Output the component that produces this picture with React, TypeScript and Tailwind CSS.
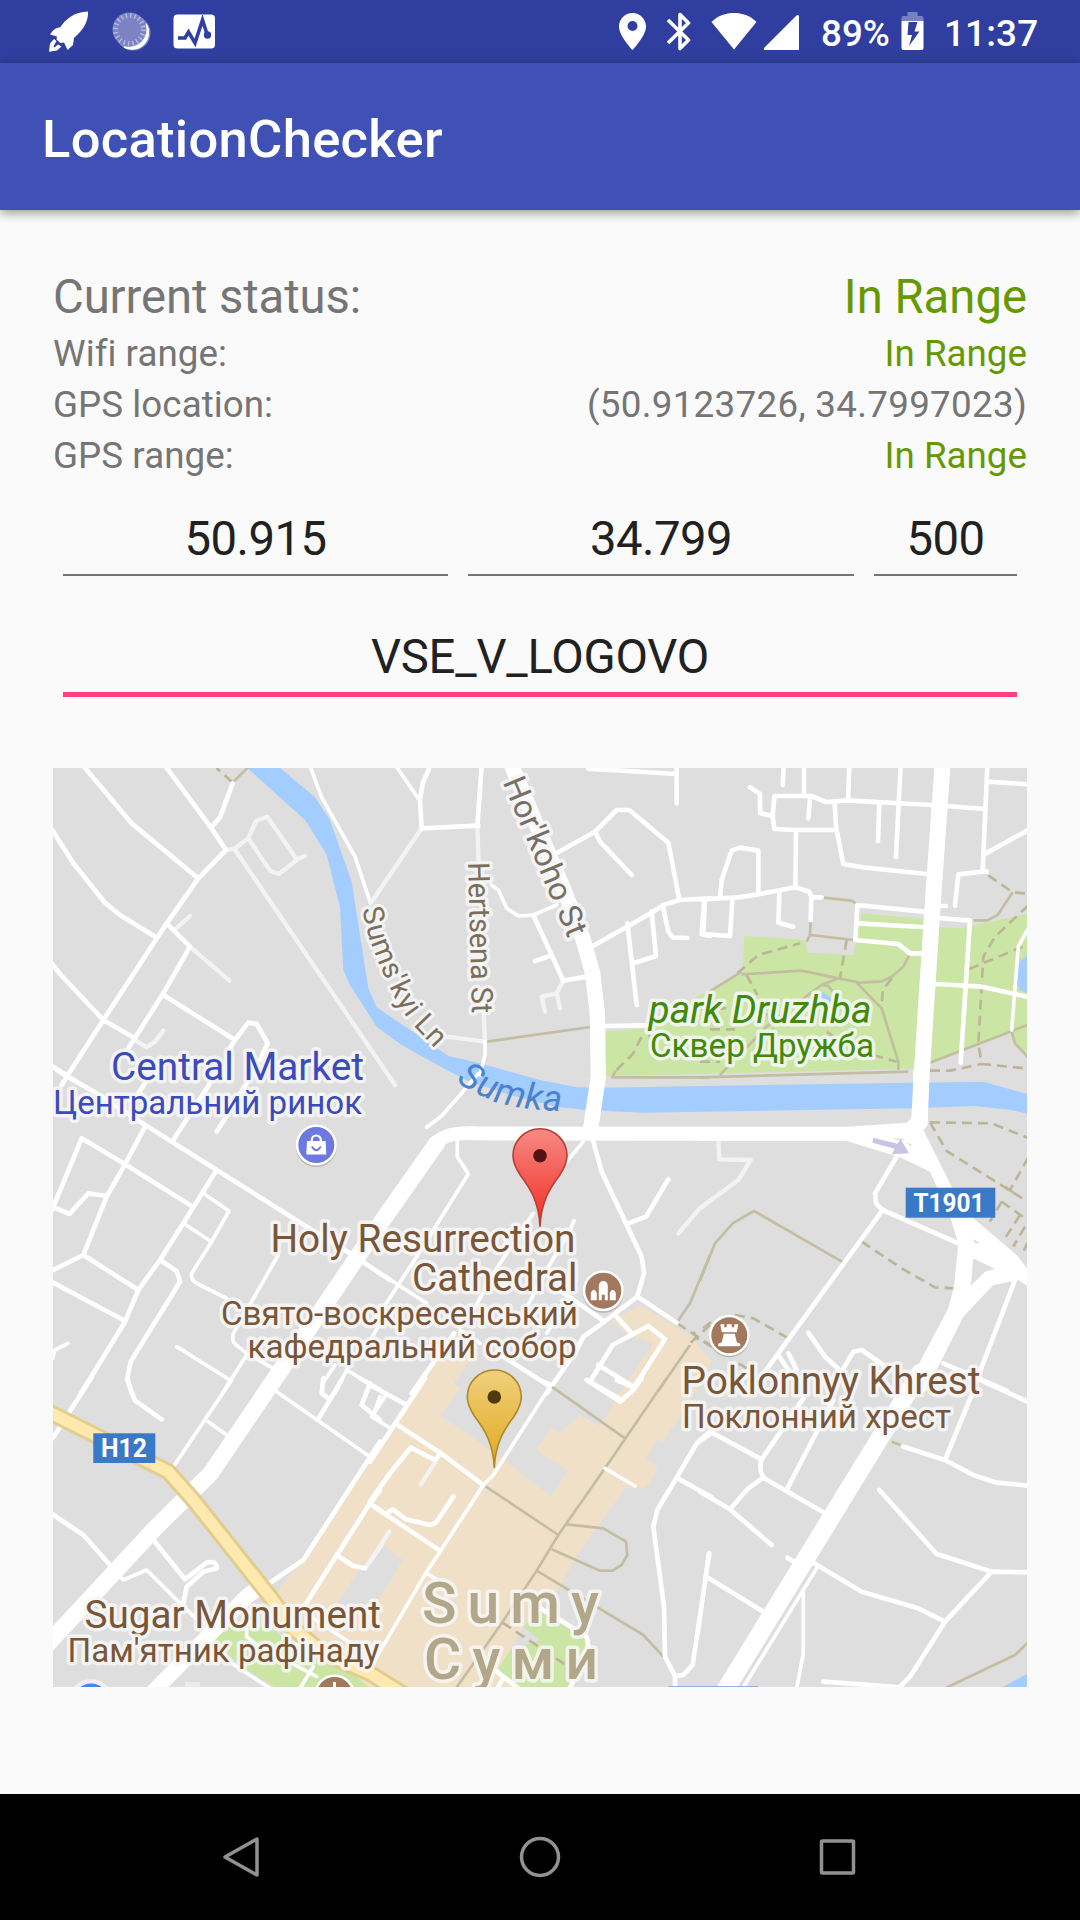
import type { ReactNode } from "react";

const W = "#ffffff";
const FAINT = "#f3f3f3";
const TRAIL = "#c3bda2";

/* The map is drawn on a 3x3 grid of tiles, each with 3 drawing units per pixel. */
const tileOrigin = (col: number, row: number) =>
  `translate(${40 + col * 330} ${760 + row * 310}) scale(0.33333)`;

type Tile = {
  col: number;
  row: number;
  streets?: string;
  thin?: string;
  faint?: string;
  trail?: string;
  dashed?: string;
};

const tiles: Tile[] = [
  {
    col: 0,
    row: 0,
    streets:
      "M130 18L275 190L475 355M376 18L513 203L558 270L475 355L380 490L190 780L80 950L65 975M578 70L540 172L513 203M36 209L100 310L195 428L240 465L350 533M380 490L450 560L370 700L265 865M370 705L585 840M36 611L60 642L190 780L285 835M585 840L570 865M585 840L625 788L650 792L683 850L660 900M36 918L110 965",
    thin: "M810 18L845 112L945 290L992 430",
    faint:
      "M558 270L583 266L625 235L648 183L682 170L770 298L795 288M625 235L690 332L717 342L770 300M583 266L1065 975M405 508L450 468M450 560L568 662M285 840L320 862L345 845L370 812",
    trail: "M578 68L626 20",
    dashed: "M576 66L530 24",
  },
  {
    col: 1,
    row: 0,
    streets:
      "M540 290L675 215L740 150H778L895 248L928 420L1020 415M675 215L690 245L785 345M665 560L850 455L880 435L928 420M655 26L920 42M920 20V130M772 490L800 735M845 455L858 588L790 610M878 435L895 515L910 533L952 534M1003 420L995 523L1020 528M705 798L830 796M490 465L580 662L650 650M495 603L540 588M155 205L325 197M180 18L158 70L150 120L155 205M335 18L322 197",
    thin: "M78 18L148 120M365 375L385 390L410 445L445 468L490 465L560 435M345 845V885L330 945",
    faint:
      "M155 205L2 430M322 197L326 310M580 662L560 700L515 710L525 755M560 700L570 745M200 826L345 845L340 740",
    trail: "M350 845L662 801M1020 952H727L737 932",
    dashed: "M740 930L790 880L812 835L850 825",
  },
  {
    col: 2,
    row: 0,
    streets:
      "M251 18L248 75M312 18V105M448 18L444 120M602 18L588 290M150 82L180 102V160L218 168M218 168L223 108H335L378 126L440 121L695 135L855 147M218 168L223 207L290 210H405M404 130L408 200L430 312L490 322L680 342M330 115L325 175M538 132L534 243M288 210L286 382M60 415L65 360L95 272L120 263L175 272V400M0 418L60 415L115 412L175 403L286 382L328 395L334 412L332 480M334 412H365M238 400L235 488L280 500M15 420L10 522L90 528L97 418M862 18L848 335M862 65L985 73M858 280L985 210M765 437L775 343L848 335H860M720 438H738M670 455L472 435L466 540L595 552L630 580H665M475 490L665 501M720 474L810 482L782 908M705 672L845 680L985 711",
    thin: "M985 505L955 560L935 810",
    trail:
      "M332 482L330 525L320 545M332 525L460 540M368 413L455 422L470 432M20 700L125 635M125 643L305 632L415 655L480 668L545 664L575 650L610 620L628 585M470 668L545 745L595 905V930M415 655L365 675L270 745L200 800L60 945M365 675L385 678L398 695M0 952L625 935M820 481H862L893 465L938 397M690 908L985 794M935 815L945 850L985 893",
    dashed:
      "M112 640L175 585L300 550M440 540L420 655M575 655L548 690L545 745M140 645L172 705M865 346L938 397L975 400M985 436L885 530L850 590L835 850L845 912L975 925M808 627L968 560M690 932H750L845 912M520 885L590 905M30 808H105M0 745H95M200 760L220 810M380 815L430 850M0 905H60",
  },
  {
    col: 0,
    row: 1,
    streets:
      "M50 0L85 22L170 70L300 155L530 300L800 470L930 550L1050 630M315 170L255 283L200 380L130 555M36 420L125 205L255 283L455 408M36 410L88 432L145 370L200 378M130 555L36 602M130 555L295 660M36 636L250 750M530 300L430 460L360 570L295 660L255 755L120 975M315 40L285 85M510 40L400 210M620 40L530 185M360 570L410 603L420 635L272 875L262 925L275 970",
    thin: "M490 370L567 423L515 515L455 610Q450 632 480 645L560 685M430 460L515 515M410 830L570 930M715 555L580 790Q575 812 585 822L620 850L700 895M620 855L550 965M84 820L45 840L38 865M920 900L1020 960M885 885L845 945M925 890L885 970M1020 760L985 820",
  },
  {
    col: 1,
    row: 1,
    streets:
      "M670 215L695 305L815 560L822 610L802 680L690 765L640 800L620 840L530 970M802 680L920 758M895 328L828 440L775 460M560 655L700 752M740 740L785 790M835 768L728 825L660 935L755 990M835 768L885 808L790 955M685 885L790 950M385 850L540 950M252 790L125 970",
    thin: "M325 10L278 66L215 138L170 172M262 215V260L295 312L140 560L10 760M640 215L590 275M490 430L370 610L300 740M612 452L600 480L530 600L440 770M100 655L170 700M270 780L330 820M600 680L530 790M0 590L170 700M0 945L30 960",
    faint: "M1025 388L985 420L925 490",
    trail: "M1020 555L960 700L922 755M960 825L865 962",
    dashed: "M922 760L1020 825M1020 765L960 820M970 785L985 810",
  },
  {
    col: 2,
    row: 1,
    streets:
      "M590 260L525 370L528 400L548 420L775 520M548 420L195 905M235 855L265 900M265 850L290 900M325 788L375 860L425 905M425 905L460 845L485 840L550 885M945 630L840 905M730 880L920 962",
    faint: "M55 212L58 268L152 270L115 330L0 415",
    trail: "M0 632L45 520L98 460L162 423L435 580",
    dashed:
      "M485 515L605 595L705 652L760 655M105 735L160 745L260 802M10 775L40 750M10 815L50 840M115 880L150 900M690 157L875 160L985 204M690 157L740 243L985 396M985 262L930 360M915 350L940 368M905 395L870 455M905 395L985 452M960 435L915 505M975 470L940 530M985 515L968 548",
  },
  {
    col: 0,
    row: 2,
    streets:
      "M155 -8L38 175M262 0L285 62L365 118M36 402L130 465L210 555M340 480L435 598L500 548Q530 540 530 565L490 575L440 620L430 670M1020 185L790 540L685 612M1020 332L990 370L795 675M990 370L1020 390M890 525L940 558L975 565M905 0L838 112M850 -5L845 40L865 55M990 10L965 75L1020 120M960 -5L1020 30",
    thin: "M575 0L400 260M505 125L560 165M710 35L990 230M1020 50L1000 105M240 590L250 600L320 570L430 680L475 722M820 715L940 795M620 740V770L645 790L830 890M820 860L780 925M560 840L690 925",
    faint: "M975 565L1025 495",
  },
  {
    col: 1,
    row: 2,
    streets:
      "M165 -5L0 245M75 130L210 218L340 315M0 365L60 280L122 203L195 240L210 222M0 372L210 512M50 400L68 388L108 418L180 435L198 428L250 350M0 15L110 75M650 0L750 65L790 30L815 -5M740 0L790 22M1025 158L980 190L920 293L862 390L850 440L882 680L885 830L915 888L940 885L968 855L1018 520M920 293L1025 352M915 888V925M510 685L570 720L650 770L655 800L600 925M375 870L445 925M400 895L382 925",
    thin: "M545 12L370 285L340 315L210 515L170 575L0 865M170 580L215 608M48 45L5 110L62 145M500 -5L545 15M705 265L795 318",
    faint: "M195 248L153 312M0 545L58 455",
    trail:
      "M890 -5L705 265L565 465L500 572L400 722L258 925M545 20L765 175M345 318L565 465M590 433L700 445L768 485L772 525L755 555L728 572H690L545 508M500 572L820 765L880 830",
    dashed: "M398 728L610 870",
  },
  {
    col: 2,
    row: 2,
    streets:
      "M0 180L30 155L185 238M310 55L185 238Q175 265 190 293L375 400M190 293L145 325L90 388M0 335L90 388L215 495M400 60L262 325M840 0L985 66M815 45L735 240M610 200L735 240L820 285L890 308L985 317M538 330L710 522L875 575L985 577M875 575L735 725L630 890L595 925M262 533L283 545M335 545L485 635L655 685L735 725M22 592L185 692M370 905L600 922",
    thin: "M350 565L128 925M310 640V820L290 925M25 520L-5 760",
    trail: "M575 185L602 195M735 925L945 825L985 786",
  },
];

const line = { fill: "none", strokeLinecap: "round", strokeLinejoin: "round" } as const;

function Ground() {
  return (
    <g transform={tileOrigin(0, 0)}>
      <path
        fill="#cae5a4"
        d="M1695 815L1820 805L1980 705L2108 640L2113 528L2275 538L2297 545L2301 578L2440 586L2465 460L2650 476L2640 925L1980 942L1695 947ZM2690 500L2760 505L2830 490L2965 461V895L2920 850L2912 818L2660 912ZM560 2595L680 2600L780 2660L880 2720L1090 2790H720L620 2730L520 2645Z"
      />
      <path
        fill="#a3ccff"
        d="M612 15L795 180L830 235L860 285L900 440L910 630L930 675L1010 800L1085 855L1220 930L1290 965L1410 1005L1550 1040L1640 1050L1810 1058L1980 1055L2610 1045L2800 1038L2900 1048L2965 1061V1003L2830 965L2620 968L1690 983L1610 982L1500 960L1320 910L1225 888L1125 820L1010 742L985 685L935 365L870 180L825 112L710 15ZM2346 695L2375 715L2372 728L2346 720ZM2965 583L2935 610L2930 670L2940 690L2965 700ZM2965 2740L2880 2785H2965Z"
      />
      <path
        fill="#f0e0c8"
        d="M1800 1635L1950 1725L2015 1805L1990 1850L1925 1960L1870 2045L1852 2038L1818 2095L1855 2122L1818 2182L1755 2185L1680 2290L1610 2390L1550 2490L1490 2550L1450 2600L1375 2730L1420 2790H1000L830 2660L740 2550L710 2520L720 2480L790 2400L1020 2045L1130 1880L1250 1715L1290 1800L1240 1870L1260 1885L1205 1965L1185 1955L1360 2075L1535 2210L1582 2132L1488 2070L1535 2005L1560 2018L1620 1965L1680 1998L1745 1890L1840 1750L1760 1725L1720 1680Z"
      />
      <path fill="#dedede" d="M960 2425L1030 2355L1088 2400L1010 2530L880 2550Z" />
      <path
        fill="#cae5a4"
        d="M1505 2550L1635 2640L1645 2690L1580 2785H1430L1375 2727L1410 2670L1500 2640L1450 2600Z"
      />
    </g>
  );
}

function Streets() {
  return (
    <>
      {tiles.map((t) => (
        <g key={`${t.col}${t.row}`} transform={tileOrigin(t.col, t.row)} {...line}>
          {t.dashed && (
            <path d={t.dashed} stroke="#bdb597" strokeWidth={8} strokeLinecap="butt" strokeDasharray="30 18" />
          )}
          {t.trail && <path d={t.trail} stroke={TRAIL} strokeWidth={8} strokeLinecap="butt" />}
          {t.faint && <path d={t.faint} stroke={FAINT} strokeWidth={13} />}
          {t.thin && <path d={t.thin} stroke={W} strokeWidth={11} />}
          {t.streets && <path d={t.streets} stroke={W} strokeWidth={14} />}
        </g>
      ))}
    </>
  );
}

function MainRoads() {
  return (
    <>
      <g transform={tileOrigin(0, 0)} {...line} stroke={W}>
        <path strokeWidth={46} d="M1410 5L1580 410L1630 540L1658 640L1672 760L1675 950L1650 1120" />
        <path strokeWidth={42} d="M2430 1122L1310 1120Q1215 1115 1190 1150" />
        <path strokeWidth={50} d="M1190 1150L990 1435L702 1860L512 2140L345 2305L20 2655" />
        <path strokeWidth={46} d="M660 2480L620 2510L340 2795" />
        <path strokeWidth={48} d="M2708 10L2677 450L2644 960L2638 1080" />
        <path strokeWidth={54} d="M2640 1838L2050 2800" />
      </g>
      <g transform={tileOrigin(2, 1)}>
        <path
          fill={W}
          fillRule="evenodd"
          d="M0 172L440 170L620 158L638 140L640 0H688L683 165L670 180L755 350L820 445L950 555L985 600V650L955 630L880 645L790 740L720 880L675 965L610 960L652 890L745 715L762 650L775 520L750 440L690 305L600 262L440 213H0ZM820 565L885 597L855 605L812 648ZM818 507L840 520L825 520ZM575 205L614 206L604 214ZM620 218L635 223L633 230Z"
        />
        <path fill="#c5c6e6" d="M520 203L592 221L602 208L627 250L575 253L584 236L517 218Z" />
      </g>
      <g transform={tileOrigin(0, 2)} {...line}>
        <path stroke="#e2cd90" strokeWidth={52} d="M20 93L385 275L460 360L690 650L760 745L850 820L990 880L1110 955" />
        <path stroke="#ffe9ae" strokeWidth={34} d="M20 93L385 275L460 360L690 650L760 745L850 820L990 880L1110 955" />
        <path stroke="#7fa8dc" strokeWidth={3} strokeLinecap="butt" d="M1886 920H2154" />
      </g>
    </>
  );
}

type LabelProps = {
  x: number;
  y: number;
  w: number;
  size: number;
  color?: string;
  italic?: boolean;
  weight?: number;
  transform?: string;
  children: ReactNode;
};

function Label({ x, y, w, size, color = "#7a5638", italic, weight = 400, transform, children }: LabelProps) {
  return (
    <text
      x={x}
      y={y}
      textLength={w}
      lengthAdjust={weight === 500 ? "spacing" : "spacingAndGlyphs"}
      fontSize={size}
      fontWeight={weight}
      fontStyle={italic ? "italic" : "normal"}
      fill={color}
      stroke="#f7f7f7"
      strokeOpacity={0.85}
      strokeWidth={7}
      strokeLinejoin="round"
      paintOrder="stroke"
      transform={transform}
    >
      {children}
    </text>
  );
}

function Poi({ x, y, color, children }: { x: number; y: number; color: string; children?: ReactNode }) {
  return (
    <g transform={`translate(${x} ${y})`}>
      <circle cy={1.5} r={20.5} fill="#b9b5ae" />
      <circle r={20.5} fill="#fff" />
      <circle r={18} fill={color} />
      {children}
    </g>
  );
}

function Marker({ x, y, fill, stroke, dot }: { x: number; y: number; fill: string; stroke: string; dot: string }) {
  return (
    <g transform={`translate(${x} ${y})`}>
      <path
        d="M0 71C-1 46 -10 32 -20 19C-25 11 -27 6 -27 0A27 27 0 0 1 27 0C27 6 25 11 20 19C10 32 1 46 0 71Z"
        fill={fill}
        stroke={stroke}
        strokeWidth={1.6}
      />
      <circle r={6.8} fill={dot} />
    </g>
  );
}

function CityMap() {
  return (
    <svg
      className="block h-[919px] w-[974px] shrink-0"
      viewBox="53 768 974 919"
      fontFamily="Roboto, 'Noto Sans', sans-serif"
    >
      <defs>
        <linearGradient id="red" x1="0" y1="0" x2="0" y2="1">
          <stop offset="0" stopColor="#f68a83" />
          <stop offset="1" stopColor="#f22c22" />
        </linearGradient>
        <linearGradient id="amber" x1="0" y1="0" x2="0" y2="1">
          <stop offset="0" stopColor="#efd07c" />
          <stop offset="1" stopColor="#e2a91c" />
        </linearGradient>
        <path id="sumka" d="M456 1081Q474 1095 503 1104Q530 1111 570 1111" />
        <path id="sumskyi" d="M362 909L369 938L379 964L391 990Q399 1008 412 1024L444 1058" />
      </defs>
      <rect x={53} y={768} width={974} height={919} fill="#dedede" />
      <Ground />
      <Streets />
      <MainRoads />

      <rect x={185} y={1682} width={15} height={8} fill="#ebebeb" />
      <circle cx={91} cy={1702} r={23} fill="#f0f0f0" />
      <circle cx={91} cy={1702} r={18.5} fill="#4285f4" />
      <Poi x={316.3} y={1145} color="#6c7ae0">
        <path d="M-9.3 -4H9.3L10 9.500H-10Z" fill="#fff" />
        <path d="M-4.500 -3V-5A4.500 4.500 0 0 1 4.500 -5V-3" fill="none" stroke="#fff" strokeWidth={2.2} />
        <path d="M-4.500 1.500Q0 9 4.500 1.500" fill="none" stroke="#6c7ae0" strokeWidth={1.8} />
      </Poi>
      <Poi x={603.3} y={1290.7} color="#a2795c">
        <path
          fill="#fff"
          d="M-12.500 9.500V2Q-9.500 -4 -6.500 2V9.500ZM12.500 9.500V2Q9.500 -4 6.500 2V9.500ZM-4.500 9.500V-5Q-4 -9.500 0 -9.700Q4 -9.500 4.500 -5V9.500H1.500V4H-1.500V9.500Z"
        />
      </Poi>
      <Poi x={729.3} y={1335.3} color="#a2795c">
        <path
          fill="#fff"
          d="M-9 -11H-5V-8H-2.500V-11H2.500V-8H5V-11H9L7.500 -3H-7.500ZM-5.500 -1.500H5.500L7.500 7L11 8.500V11H-11V8.500L-7.500 7Z"
        />
      </Poi>
      <Poi x={334.500} y={1695} color="#a2795c">
        <path d="M-1.500 -13H1.500V0H-1.500Z" fill="#fff" />
      </Poi>

      <rect x={905.7} y={1187.7} width={89.6} height={30} fill="#3a78c8" />
      <text x={913.500} y={1211.500} textLength={71} lengthAdjust="spacingAndGlyphs" fontSize={25.500} fontWeight={700} fill="#fff">
        T1901
      </text>
      <rect x={93.3} y={1433.3} width={62} height={29.7} fill="#3a78c8" />
      <text x={101} y={1457} textLength={46} lengthAdjust="spacingAndGlyphs" fontSize={25.500} fontWeight={700} fill="#fff">
        H12
      </text>

      <Label x={111} y={1079.500} w={253} size={39} color="#3b4bbd">Central Market</Label>
      <Label x={53} y={1114} w={309} size={32.500} color="#3b4bbd">Центральний ринок</Label>
      <Label x={270.500} y={1252} w={305} size={39}>Holy Resurrection</Label>
      <Label x={412} y={1290.500} w={165.500} size={39}>Cathedral</Label>
      <Label x={221} y={1325} w={357} size={33}>Свято-воскресенський</Label>
      <Label x={247.500} y={1357.700} w={329} size={33}>кафедральний собор</Label>
      <Label x={681.500} y={1393.500} w={299} size={39}>Poklonnyy Khrest</Label>
      <Label x={682} y={1428.300} w={269} size={33}>Поклонний хрест</Label>
      <Label x={84.500} y={1628.300} w={296.500} size={39}>Sugar Monument</Label>
      <Label x={67.500} y={1662.300} w={312} size={33}>Пам'ятник рафінаду</Label>
      <Label x={648.500} y={1022.700} w={223} size={39} color="#3f8a08" italic>park Druzhba</Label>
      <Label x={650} y={1056.700} w={224} size={33} color="#3f8a08">Сквер Дружба</Label>
      <Label x={422} y={1622.700} w={177} size={57} weight={500} color="#b2a788">Sumy</Label>
      <Label x={424} y={1679.300} w={174} size={57} weight={500} color="#b2a788">Суми</Label>
      <Label x={0} y={0} w={170} size={32} color="#776e66" transform="translate(502.500 782) rotate(67.300)">
        Hor'koho St
      </Label>
      <Label x={0} y={0} w={151} size={30} color="#7a6f5c" transform="translate(468 862.500) rotate(88.500)">
        Hertsena St
      </Label>
      <text
        fontSize={29}
        fill="#7a6f5c"
        stroke="#f4f4f4"
        strokeWidth={6}
        strokeLinejoin="round"
        paintOrder="stroke"
        letterSpacing={0.7}
      >
        <textPath href="#sumskyi">Sums'kyi Ln</textPath>
      </text>
      <text fontSize={36.500} fontStyle="italic" fill="#4b82cf" letterSpacing={0.800}>
        <textPath href="#sumka">Sumka</textPath>
      </text>

      <Marker x={540} y={1155.700} fill="url(#red)" stroke="#b73d36" dot="#511412" />
      <Marker x={494.300} y={1397} fill="url(#amber)" stroke="#ad872c" dot="#4f3a10" />
    </svg>
  );
}

function StatusBar() {
  return (
    <header className="flex h-[63px] items-start bg-[#303f9f] text-white">
      <svg className="mt-[10px] ml-[48px] h-[44px] w-[41px]" viewBox="48 10 41 44" fill="#fff">
        <path d="M88 11.500C74 11.500 65 20 60 27.500C56 27.500 53 30 50 34.500L57 36.500L56.500 39.500L60.500 43L64 42.500L67.500 50L73 45L74 38C82 31 88.500 23 88 11.500Z" />
        <path d="M54 39L50 43.500L49 51.800L57 50.500L61.500 46.500L58 44.500L54.500 47.500L53.500 46.500L56.500 41Z" />
      </svg>
      <svg className="mt-[11px] ml-[23px] h-[41px] w-[40px]" viewBox="112 11 40 41">
        <circle cx={133} cy={33} r={17.500} fill="#8189c8" />
        <path d="M146 24A16.500 16.500 0 0 1 124 47A19 19 0 0 0 146 24Z" fill="#fff" stroke="#fff" strokeWidth={1.500} />
        <circle cx={129.500} cy={29.500} r={17} fill="#7b83c2" />
        <circle cx={129.500} cy={29.500} r={14} fill="none" stroke="#b3b8de" strokeWidth={5} strokeDasharray="1.500 2.900" />
      </svg>
      <svg className="mt-[13px] ml-[20px] h-[37px] w-[44px]" viewBox="172 13 44 37">
        <rect x={173.500} y={14.500} width={41.500} height={34} rx={4} fill="#fff" />
        <path d="M178 38H185L188.500 32L195 43L202.500 20L207 34" fill="none" stroke="#303f9f" strokeWidth={3.600} />
        <circle cx={207.500} cy={35} r={3.700} fill="#303f9f" />
      </svg>
      <div className="flex-1" />
      <svg className="mt-[12px] h-[39px] w-[28px]" viewBox="618 12 28 39" fill="#fff">
        <path
          fillRule="evenodd"
          d="M632.500 13C625 13 619 19 619 26.500C619 36 632.500 50 632.500 50S646 36 646 26.500C646 19 640 13 632.500 13ZM632.500 21A5 5 0 1 1 632.500 31A5 5 0 1 1 632.500 21Z"
        />
      </svg>
      <svg className="mt-[12px] ml-[20px] h-[39px] w-[26px]" viewBox="666 12 26 39">
        <path
          d="M668 20L688.500 40L680 48.500V14.500L688.500 23L668 43"
          fill="none"
          stroke="#fff"
          strokeWidth={3.600}
          strokeLinejoin="round"
        />
      </svg>
      <svg className="mt-[12px] ml-[19px] h-[38px] w-[47px]" viewBox="711 12 47 38" fill="#fff">
        <path d="M734 49.500L711.500 22C718 15.500 726 13 734 13S750 15.500 756.500 22Z" />
      </svg>
      <svg className="mt-[14px] ml-[6px] h-[37px] w-[36px]" viewBox="764 14 36 37" fill="#fff">
        <path d="M796.500 15.500Q799 14 799 16.500V50H765.500Q763 50 764.500 47.500Z" />
      </svg>
      <span className="ml-[21px] w-[71px] pt-[8px] text-[36.75px] leading-[52px] font-medium">89%</span>
      <svg className="mt-[12px] ml-[9px] h-[39px] w-[23px]" viewBox="901.500 12 23 39">
        <path d="M908 12H918V16H922Q924 16 924 18V21H902V18Q902 16 904 16H908Z" fill="#7780c0" />
        <path fillRule="evenodd" d="M902 21H924V48Q924 50 922 50H904Q902 50 902 48ZM909 22L908 35H912.500L909.500 46L920 31.500H915L918 22Z" fill="#fff" />
      </svg>
      <span className="mr-[42px] ml-[20px] w-[94px] pt-[8px] text-[36.75px] leading-[52px] font-medium tracking-[0.2px]">
        11:37
      </span>
    </header>
  );
}

function Row({ label, value, green = true }: { label: string; value: string; green?: boolean }) {
  return (
    <div className="flex justify-between text-[36.75px] leading-[51px]">
      <span className="tracking-[0.05px]">{label}</span>
      <span className={green ? "text-[#669900]" : "tracking-[0.3px]"}>{value}</span>
    </div>
  );
}

function Field({ value, className }: { value: string; className: string }) {
  return (
    <div
      className={`border-b-[2px] border-[#757575] pt-[30px] pb-[7px] text-center leading-[56px] tracking-[-0.5px] ${className}`}
    >
      {value}
    </div>
  );
}

export default function App() {
  return (
    <div className="flex h-[1920px] w-[1080px] flex-col overflow-hidden bg-[#fafafa] font-[Roboto,'Noto_Sans',sans-serif]">
      <StatusBar />
      <div className="relative flex h-[147px] shrink-0 items-center bg-[#3f51b5] pt-[5px] pl-[42px] text-[52.5px] font-medium tracking-[0.3px] text-white shadow-[0_3px_10px_rgba(0,0,0,0.4)]">
        LocationChecker
      </div>
      <main className="flex flex-1 flex-col px-[53px] pt-[59px]">
        <section className="text-[#757575]">
          <div className="flex h-[59px] justify-between text-[47.25px] leading-[56px]">
            <span className="tracking-[-0.1px]">Current status:</span>
            <span className="text-[#669900]">In Range</span>
          </div>
          <Row label="Wifi range:" value="In Range" />
          <Row label="GPS location:" value="(50.9123726, 34.7997023)" green={false} />
          <Row label="GPS range:" value="In Range" />
        </section>
        <section className="px-[10px] text-[47.25px] text-[#212121]">
          <div className="flex gap-[20px]">
            <Field value="50.915" className="w-[385px]" />
            <Field value="34.799" className="w-[386px]" />
            <Field value="500" className="w-[143px]" />
          </div>
          <div className="border-b-[5px] border-[#ff4081] pt-[53px] pb-[7px] text-center leading-[56px] tracking-[-0.2px]">
            VSE_V_LOGOVO
          </div>
        </section>
        <div className="pt-[71px]">
          <CityMap />
        </div>
      </main>
      <nav className="flex h-[126px] shrink-0 items-center justify-between bg-black px-[220px]">
        <svg className="h-[44px] w-[42px]" viewBox="0 0 42 44" fill="none" stroke="#919191" strokeWidth={3.500}>
          <path d="M37 4V40L5 22Z" strokeLinejoin="round" />
        </svg>
        <svg className="h-[44px] w-[44px]" viewBox="0 0 44 44" fill="none" stroke="#919191" strokeWidth={3.500}>
          <circle cx={22} cy={22} r={18.500} />
        </svg>
        <svg className="h-[44px] w-[42px]" viewBox="0 0 42 44" fill="none" stroke="#919191" strokeWidth={3.500}>
          <rect x={3.500} y={6} width={32} height={32} rx={1} />
        </svg>
      </nav>
    </div>
  );
}
